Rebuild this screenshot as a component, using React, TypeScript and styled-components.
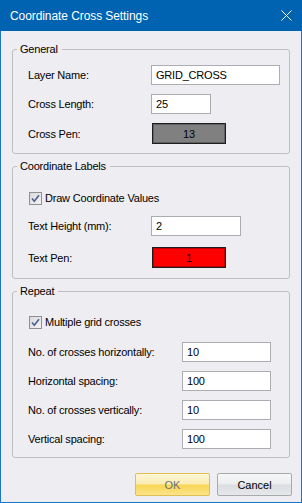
import styled, { createGlobalStyle } from "styled-components";

const Global = createGlobalStyle`
  html, body {
    margin: 0;
    padding: 0;
    background: #eeedf2;
  }
  body {
    font-family: "Liberation Sans", Arial, sans-serif;
  }
`;

const Window = styled.div`
  width: 302px;
  height: 503px;
  box-sizing: border-box;
  border: 1px solid #1b74c5;
  border-top: none;
  background: #eeedf2;
  display: flex;
  flex-direction: column;
`;

const TitleBar = styled.div`
  height: 31px;
  margin: 0 -1px;
  padding: 0 10px;
  background: #0063b1;
  color: #fff;
  display: flex;
  align-items: center;
  justify-content: space-between;
`;

const Title = styled.span`
  font-size: 12px;
  letter-spacing: -0.08px;
  line-height: 14px;
  margin-top: 1px;
`;

const Content = styled.div`
  padding: 11px 11px 0;
  display: flex;
  flex-direction: column;
  gap: 5px;
`;

const Group = styled.fieldset`
  margin: 0;
  padding: 0 4px;
  min-width: 0;
  border: 1px solid #bdbdc2;
  border-radius: 3px;
`;

const Legend = styled.legend`
  padding: 0 4px 0 3px;
  font-size: 11px;
  letter-spacing: -0.2px;
  line-height: 14px;
  color: #000;
`;

const Body = styled.div<{ $top: number; $bottom: number }>`
  display: flex;
  flex-direction: column;
  padding: ${(p) => p.$top}px 0 ${(p) => p.$bottom}px 11px;
`;

const Row = styled.div<{ $h?: number; $gap?: number }>`
  display: flex;
  align-items: center;
  height: ${(p) => p.$h ?? 20}px;
  margin-top: ${(p) => p.$gap ?? 0}px;
`;

const Label = styled.span<{ $w: number }>`
  width: ${(p) => p.$w}px;
  flex: none;
  font-size: 11px;
  letter-spacing: -0.2px;
  color: #000;
  white-space: nowrap;
`;

const Input = styled.div<{ $w: number }>`
  width: ${(p) => p.$w}px;
  height: 20px;
  box-sizing: border-box;
  border: 1px solid #abadb3;
  background: #fff;
  padding: 0 4px;
  display: flex;
  align-items: center;
  font-size: 11px;
  letter-spacing: -0.2px;
  color: #000;
`;

const Swatch = styled.div<{ $color: string }>`
  width: 74px;
  height: 21px;
  box-sizing: border-box;
  border: 1px solid #1e1e1e;
  box-shadow: inset 0 0 0 1px rgba(0, 0, 0, 0.25);
  background: ${(p) => p.$color};
  display: flex;
  align-items: center;
  justify-content: center;
  font-size: 11px;
  color: #000;
`;

const Check = styled.label`
  display: flex;
  align-items: center;
  gap: 3px;
  margin-left: 1px;
  font-size: 11px;
  letter-spacing: -0.2px;
  color: #000;
`;

const ButtonRow = styled.div`
  display: flex;
  justify-content: flex-end;
  gap: 7px;
  margin: 10px -2px 0 0;
`;

const Button = styled.button<{ $primary?: boolean }>`
  width: 75px;
  height: 23px;
  box-sizing: border-box;
  padding: 0;
  border-radius: 2px;
  font-family: "Liberation Sans", Arial, sans-serif;
  font-size: 11px;
  border: 1px solid ${(p) => (p.$primary ? "#e0be55" : "#a8a9ab")};
  color: ${(p) => (p.$primary ? "#6f6f6f" : "#000")};
  background: ${(p) =>
    p.$primary
      ? "linear-gradient(#fef6d6 0%, #fcecb4 45%, #f8d656 55%, #fbe389 100%)"
      : "linear-gradient(#f7f7f7 0%, #eceef0 45%, #dadde2 55%, #e6e8eb 100%)"};
`;

function CheckBox() {
  return (
    <svg width="13" height="13" viewBox="0 0 13 13">
      <defs>
        <linearGradient id="cbg" x1="0" y1="0" x2="1" y2="1">
          <stop offset="0" stopColor="#d9d9dc" />
          <stop offset="1" stopColor="#f4f4f6" />
        </linearGradient>
      </defs>
      <rect x="0.5" y="0.5" width="12" height="12" fill="url(#cbg)" stroke="#8e8f93" />
      <path d="M3 6.5 L5.3 9.3 L10 3.2" fill="none" stroke="#4b618f" strokeWidth="1.6" />
    </svg>
  );
}

function CloseIcon() {
  return (
    <svg width="11" height="11" viewBox="0 0 11 11">
      <path d="M0.5 0.5 L10.5 10.5 M10.5 0.5 L0.5 10.5" stroke="#fff" strokeWidth="1" />
    </svg>
  );
}

export default function App() {
  return (
    <>
      <Global />
      <Window>
        <TitleBar>
          <Title>Coordinate Cross Settings</Title>
          <CloseIcon />
        </TitleBar>
        <Content>
          <Group>
            <Legend>General</Legend>
            <Body $top={9} $bottom={9}>
              <Row>
                <Label $w={123}>Layer Name:</Label>
                <Input $w={129}>GRID_CROSS</Input>
              </Row>
              <Row $gap={9}>
                <Label $w={123}>Cross Length:</Label>
                <Input $w={60}>25</Input>
              </Row>
              <Row $gap={9} $h={21}>
                <Label $w={124}>Cross Pen:</Label>
                <Swatch $color="#808080">13</Swatch>
              </Row>
            </Body>
          </Group>

          <Group>
            <Legend>Coordinate Labels</Legend>
            <Body $top={15} $bottom={10}>
              <Row>
                <Check>
                  <CheckBox />
                  Draw Coordinate Values
                </Check>
              </Row>
              <Row $gap={8}>
                <Label $w={123}>Text Height (mm):</Label>
                <Input $w={90}>2</Input>
              </Row>
              <Row $gap={11} $h={21}>
                <Label $w={124}>Text Pen:</Label>
                <Swatch $color="#ff0000">1</Swatch>
              </Row>
            </Body>
          </Group>

          <Group>
            <Legend>Repeat</Legend>
            <Body $top={14} $bottom={8}>
              <Row>
                <Check>
                  <CheckBox />
                  Multiple grid crosses
                </Check>
              </Row>
              <Row $gap={10}>
                <Label $w={154}>No. of crosses horizontally:</Label>
                <Input $w={89}>10</Input>
              </Row>
              <Row $gap={9}>
                <Label $w={154}>Horizontal spacing:</Label>
                <Input $w={89}>100</Input>
              </Row>
              <Row $gap={9}>
                <Label $w={154}>No. of crosses vertically:</Label>
                <Input $w={89}>10</Input>
              </Row>
              <Row $gap={9}>
                <Label $w={154}>Vertical spacing:</Label>
                <Input $w={89}>100</Input>
              </Row>
            </Body>
          </Group>

          <ButtonRow>
            <Button $primary>OK</Button>
            <Button>Cancel</Button>
          </ButtonRow>
        </Content>
      </Window>
    </>
  );
}
